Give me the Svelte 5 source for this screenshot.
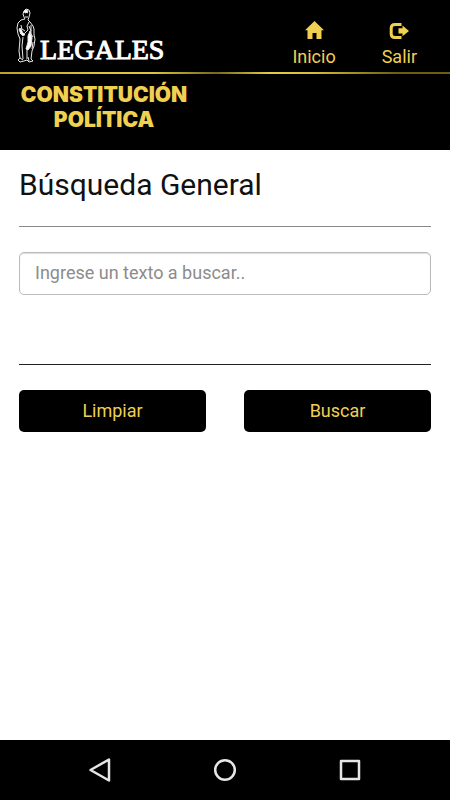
<script lang="ts">
  let query = $state("");

  function clear() {
    query = "";
  }

  function search(event: SubmitEvent) {
    event.preventDefault();
  }
</script>

<div class="screen">
  <header>
    <div class="topbar">
      <a class="brand" href="#inicio">
        <svg width="22" height="56" viewBox="0 0 22 56" fill="none" stroke="#e8e8e8" stroke-width="1" aria-hidden="true">
          <path d="M8 9 7 6 8 3 10 1 13 2 14 5 13 9 12 12 14 14 17 18 18 21 18 27 19 31 18 38 16 43 15 51 17 53 13 54 11 52 8 53 4 54 2 52 4 50 3 43 4 31 2 26 1 20 2 15 5 12 9 11Z" />
          <path d="M7 5 9 3 12 5M9 9 12 9M5 17 6 22 4 25 7 28 9 25 12 22 11 18 13 14M6 21 9 23M15 17 15 26 17 29M7 29 6 38 7 51M11 40 11 51" />
          <path d="M14 23 16 30 15 38 12 42 10 41 12 34 12 28ZM4 20 7 25 9 27 6 27 3 22ZM8 3 11 2 12 4 9 5Z" fill="#fff" />
          <path d="M4 50 7 52M12 49 13 53M17 34 16 41M13 18 15 23" />
        </svg>
        <span>LEGALES</span>
      </a>
      <nav>
        <a href="#inicio">
          <svg width="20" height="20" viewBox="0 0 20 20" fill="currentColor" aria-hidden="true">
            <path d="M10.500 1 20 10.300H17.500V19H12.500V13H8.500V19H3.500V10.300H1Z" />
          </svg>
          Inicio
        </a>
        <a href="#salir">
          <svg width="20" height="20" viewBox="0 0 20 20" aria-hidden="true">
            <path d="M12.500 4.500H6Q2.200 4.500 2.200 8V14Q2.200 17.500 6 17.500H12.500" fill="none" stroke="currentColor" stroke-width="3" />
            <path d="M9.500 8.200H13.500V5.500L20 10.900 13.500 16.300V13.600H9.500Z" fill="currentColor" />
          </svg>
          Salir
        </a>
      </nav>
    </div>
    <div class="rule"></div>
    <p class="title"><span>Constitución</span><span>Política</span></p>
  </header>

  <main>
    <h1><label for="query">Búsqueda General</label></h1>
    <form onsubmit={search}>
      <div class="field">
        <input id="query" type="text" placeholder="Ingrese un texto a buscar.." bind:value={query} />
      </div>
      <div class="actions">
        <button type="button" onclick={clear}>Limpiar</button>
        <button type="submit">Buscar</button>
      </div>
    </form>
  </main>

  <footer>
    <button type="button" aria-label="Atrás">
      <svg width="24" height="24" viewBox="0 0 24 24">
        <path d="M21 1.500V22.500L2.500 12Z" />
      </svg>
    </button>
    <button type="button" aria-label="Inicio">
      <svg width="24" height="24" viewBox="0 0 24 24">
        <circle cx="12" cy="12" r="9.800" />
      </svg>
    </button>
    <button type="button" aria-label="Recientes">
      <svg width="24" height="24" viewBox="0 0 24 24">
        <rect x="3" y="3" width="18" height="18" />
      </svg>
    </button>
  </footer>
</div>

<style>
  :global(body) {
    margin: 0;
    background: #fff;
  }

  .screen {
    display: flex;
    flex-direction: column;
    min-height: 100vh;
    font-family: Roboto, sans-serif;
    font-size: 18px;
    color: #111;
  }

  header {
    background: #000;
    color: #f0d050;
    height: 150px;
  }

  .topbar {
    display: flex;
    justify-content: space-between;
    height: 72px;
  }

  .brand {
    display: flex;
    align-items: flex-start;
    padding: 8px 0 0 16px;
    gap: 2px;
    color: #fff;
    text-decoration: none;
    font-family: "Liberation Serif", serif;
    font-size: 28px;
    line-height: 32px;
    -webkit-text-stroke: 1px #fff;
  }

  .brand span {
    margin-top: 26px;
  }

  nav {
    display: flex;
    gap: 46px;
    padding: 20px 33px 0 0;
  }

  nav a {
    display: flex;
    flex-direction: column;
    align-items: center;
    gap: 6px;
    color: inherit;
    text-decoration: none;
    line-height: 22px;
  }

  .rule {
    height: 2px;
    background: linear-gradient(to right, #b5a62b, #d8c93c 22%, #d8c93c 34%, #77691a 48%, #e0d040 60%, #d0c038 70%, #6d5f10 88%, #6d5f10);
  }

  .title {
    display: flex;
    flex-direction: column;
    align-items: center;
    width: 172px;
    margin: 0;
    padding: 8px 0 0 18px;
    font-family: Inter, sans-serif;
    font-size: 21px;
    font-weight: 900;
    line-height: 25px;
    text-transform: uppercase;
  }

  main {
    flex: 1;
    padding: 0 19px;
  }

  h1 {
    margin: 0;
    padding: 16px 0 23px;
    border-bottom: 1px solid #888;
    font-size: 30px;
    font-weight: 400;
    line-height: 37px;
  }

  .field {
    padding: 25px 0 69px;
    border-bottom: 1px solid #222;
  }

  input {
    display: block;
    box-sizing: border-box;
    width: 100%;
    height: 43px;
    padding: 0 15px 2px;
    border: 1px solid #bbb;
    border-radius: 5px;
    box-shadow: inset 0 1px 1px #ddd;
    background: #fff;
    color: #333;
    font: inherit;
  }

  input::placeholder {
    color: #8c8c8c;
    opacity: 1;
  }

  .actions {
    display: grid;
    grid-template-columns: 1fr 1fr;
    gap: 38px;
    padding-top: 25px;
  }

  .actions button {
    height: 42px;
    padding: 0 0 2px;
    border: 0;
    border-radius: 5px;
    background: #000;
    color: #f0d050;
    font: inherit;
  }

  footer {
    display: flex;
    justify-content: center;
    gap: 77px;
    height: 60px;
    background: #000;
  }

  footer button {
    display: grid;
    place-items: center;
    width: 48px;
    padding: 0;
    border: 0;
    background: none;
  }

  footer svg {
    fill: none;
    stroke: #e6e6e6;
    stroke-width: 2.5;
    stroke-linejoin: round;
  }
</style>
